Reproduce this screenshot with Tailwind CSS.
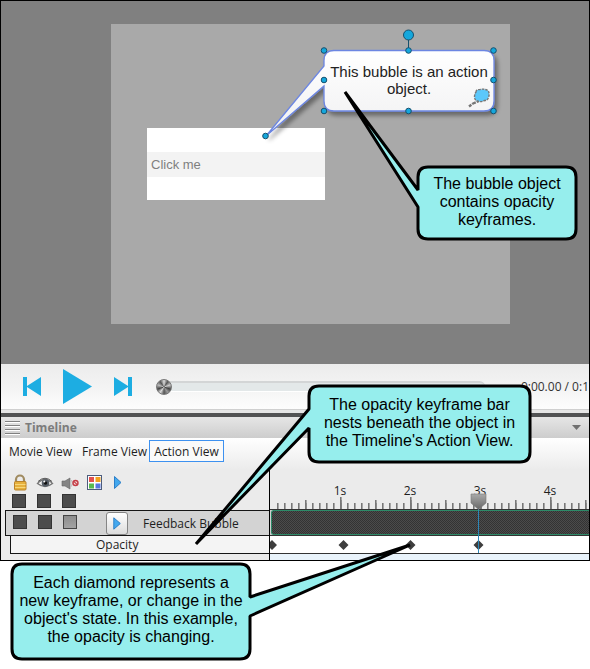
<!DOCTYPE html>
<html lang="en">
<head>
<meta charset="utf-8">
<title>Timeline action view</title>
<script src="https://cdn.jsdelivr.net/npm/@tailwindcss/browser@4"></script>
</head>
<body class="relative bg-white font-['Open_Sans',sans-serif] text-[12px] text-[#1e1e1e]">
<main class="flex flex-col overflow-hidden border border-black bg-[#ebebeb]">

  <!-- Stage -->
  <section class="flex h-[363px] bg-[#808080] pt-[23px] pr-[79px] pb-10 pl-[110px]" aria-label="Stage">
    <div class="relative flex-1 bg-[#a9a9a9]">
      <button class="absolute top-[104px] left-[36px] flex h-[72px] w-[178px] items-center bg-white">
        <span class="flex h-[25px] w-full items-center bg-[#f3f3f3] pt-px pl-1 font-['Liberation_Sans',sans-serif] text-[13px] text-[#7f7f7f]">Click me</span>
      </button>
      <svg class="absolute top-0 left-[139px] h-[124px] w-[260px]" viewBox="250 24 260 124" aria-hidden="true">
        <defs>
          <linearGradient id="bub" x1="0" y1="0" x2="0" y2="1"><stop offset="0" stop-color="#fff"/><stop offset="1" stop-color="#f0f0f1"/></linearGradient>
          <filter id="sh" x="-10%" y="-10%" width="125%" height="130%"><feDropShadow dx="3" dy="4" stdDeviation="2" flood-color="#000" flood-opacity=".38"/></filter>
        </defs>
        <path d="M334 50.500H484Q494 50.500 494 60.500V101Q494 111 484 111H334Q324 111 324 101V86L266 136L324 66V60.500Q324 50.500 334 50.500Z" fill="url(#bub)" stroke="#6c86e2" stroke-width="1.300" filter="url(#sh)"/>
        <path d="M469 106.500l4-3M473 103.500l6-2.500" stroke="#777" stroke-width="2.400" stroke-dasharray="3 1"/>
        <path d="M476 92q0-2.500 4-2.500q4-1 8 1q2 3 .5 7q-1 3-4 3q-4 2-7 .5q-3-1-3-4q0-3 1.500-5z" fill="#5bc8fb" stroke="#777" stroke-width="1.400" stroke-dasharray="2.500 1"/>
        <path d="M408.500 35V50" stroke="#16506b"/>
        <g fill="#14a7dc" stroke="#15506e">
          <circle cx="408.500" cy="35" r="5"/>
          <circle cx="324" cy="50.500" r="2.800"/><circle cx="408.500" cy="50.500" r="2.800"/><circle cx="493.500" cy="50.500" r="2.800"/>
          <circle cx="324" cy="80" r="2.800"/><circle cx="493.500" cy="80" r="2.800"/>
          <circle cx="324" cy="111" r="2.800"/><circle cx="408.500" cy="111" r="2.800"/><circle cx="493.500" cy="111" r="2.800"/>
          <circle cx="265.500" cy="136" r="2.800"/>
        </g>
      </svg>
      <p class="absolute top-[39px] left-[213px] w-[170px] text-center font-['Liberation_Sans',sans-serif] text-[15px] leading-[17px] text-[#222]">This bubble is an action object.</p>
    </div>
  </section>

  <!-- Player controls -->
  <section class="flex h-[45px] items-center overflow-hidden bg-linear-to-b from-[#ececec] via-[#f3f3f3] to-[#fdfdfd] pl-[22px]" aria-label="Player">
    <button aria-label="Previous"><svg class="h-[19px] w-[18px]" viewBox="0 0 18 19" fill="#1dade2"><path d="M0 0h4v9L18 0v19L4 10v9H0z"/></svg></button>
    <button class="ml-[22px]" aria-label="Play"><svg class="h-[35px] w-[29px]" viewBox="0 0 29 35" fill="#1dade2"><path d="M0 0L29 17.500L0 35z"/></svg></button>
    <button class="ml-[22px]" aria-label="Next"><svg class="h-[19px] w-[18px]" viewBox="0 0 18 19" fill="#1dade2"><path d="M0 0L14 9V0h4v19h-4v-9L0 19z"/></svg></button>
    <input type="range" min="0" max="100" value="0" aria-label="Position" class="ml-6 h-[11px] min-w-0 flex-1 appearance-none rounded-full border-t-2 border-b border-t-[#d3d5d6] border-b-white bg-[#e3e8e9] [&::-webkit-slider-thumb]:h-4 [&::-webkit-slider-thumb]:w-4 [&::-webkit-slider-thumb]:appearance-none [&::-webkit-slider-thumb]:rounded-full [&::-webkit-slider-thumb]:border [&::-webkit-slider-thumb]:border-[#777] [&::-webkit-slider-thumb]:bg-[conic-gradient(#ddd,#555,#ccc,#444,#999,#555,#ddd,#444,#bbb,#555,#ddd)]">
    <span class="ml-9 pt-px text-right whitespace-nowrap text-[#333]">0:00.00 / 0:1</span>
  </section>
  <div class="h-2 border-t border-b-4 border-t-[#d0d0d0] border-b-[#525354] bg-[#e6e6e6]"></div>

  <!-- Timeline header -->
  <header class="flex h-[21px] items-center bg-linear-to-b from-[#e6e6e6] to-[#cdcdcd] pr-2 pl-1">
    <svg class="h-[14px] w-[15px]" viewBox="0 0 15 14" aria-hidden="true"><path d="M0 1.500h15M0 5.500h15M0 9.500h15M0 13.500h15" stroke="#fff"/><path d="M0 .5h15M0 4.500h15M0 8.500h15M0 12.500h15" stroke="#808080"/></svg>
    <h2 class="ml-[5px] flex-1 pt-px font-bold text-[#7c7c7c]">Timeline</h2>
    <button aria-label="Timeline menu"><svg class="h-[5px] w-[9px]" viewBox="0 0 9 5"><path d="M0 0h9L4.500 5z" fill="#707070"/></svg></button>
  </header>

  <nav class="flex h-8 items-start bg-linear-to-b from-white to-[#ebebeb] pt-[2px] pl-2" aria-label="Views">
    <button class="h-[22px] w-[62px] pt-[2px] whitespace-nowrap">Movie View</button>
    <button class="ml-[11px] h-[22px] w-[62px] pt-[2px] whitespace-nowrap">Frame View</button>
    <button class="ml-[5px] h-[22px] w-[75px] border border-[#3d91f0] bg-[#fafafa] pt-[2px] whitespace-nowrap">Action View</button>
  </nav>

  <!-- Tracks -->
  <section class="flex h-[90px]" aria-label="Tracks">
    <div class="w-[269px] shrink-0 border-r border-black">
      <div class="flex h-[24px] items-center pt-[2px] pl-3">
        <svg class="h-4 w-[104px]" viewBox="13 475 104 16" overflow="visible" role="img" aria-label="Lock, visibility, audio, color and action columns">
          <path d="M16 483v-3.500a4 4 0 0 1 8 0V483" fill="none" stroke="#a08b60" stroke-width="2.200"/>
          <rect x="14.500" y="481.500" width="11.500" height="8.500" rx="1" fill="#e6b03c" stroke="#b9822a"/><path d="M15 484.500h10.500M15 487.500h10.500" stroke="#f6d67a"/>
          <path d="M37.500 483.500Q45 475.500 52.500 483.500Q45 489.500 37.500 483.500Z" fill="#f4f4f4" stroke="#777" stroke-width="1.400"/><path d="M38 481.500Q45 475 52 481.500" fill="none" stroke="#555"/>
          <circle cx="45.500" cy="483" r="3.800" fill="#555d66"/><circle cx="45.500" cy="483" r="1.800" fill="#111"/><circle cx="44.300" cy="481.600" r="1" fill="#fff"/>
          <path d="M62 481h3l5-3v11l-5-3h-3z" fill="#858585" stroke="#666" stroke-width=".6"/><path d="M71.500 480q1.500 3 0 6.500" stroke="#bbb" fill="none"/>
          <circle cx="75.500" cy="483" r="2.500" fill="#f3dcdc" stroke="#c43c45" stroke-width="1.400"/><path d="M73.800 481.300l3.400 3.400" stroke="#c43c45" stroke-width="1.200"/>
          <rect x="87.500" y="475.500" width="14" height="14" fill="#fff" stroke="#4c5c7c"/>
          <rect x="89" y="477" width="5" height="5" fill="#e3504e"/><rect x="95.500" y="477" width="5" height="5" fill="#f2a11e"/><rect x="89" y="483.500" width="5" height="5" fill="#58ba50"/><rect x="95.500" y="483.500" width="5" height="5" fill="#5877e0"/>
          <path d="M114.500 476.500L121 482.500L114.500 488.500Z" fill="#43a8ee" stroke="#2c7fc8"/>
        </svg>
      </div>
      <div class="flex h-[16px] items-start gap-[11px] pl-[11px]">
        <input type="checkbox" aria-label="Lock all" class="size-[14px] appearance-none border border-[#333] bg-[#4c4c4c]">
        <input type="checkbox" aria-label="Show all" class="size-[14px] appearance-none border border-[#333] bg-[#4c4c4c]">
        <input type="checkbox" aria-label="Mute all" class="size-[14px] appearance-none border border-[#333] bg-[#4c4c4c]">
      </div>
      <div class="ml-1 flex h-[26px] items-center gap-[11px] border-y border-l border-[#151515] bg-[#d3d3d3] pl-[7px]">
        <input type="checkbox" aria-label="Lock" class="mb-[2px] size-[14px] appearance-none border border-[#333] bg-[#4c4c4c]">
        <input type="checkbox" aria-label="Show" class="mb-[2px] size-[14px] appearance-none border border-[#333] bg-[#4c4c4c]">
        <input type="checkbox" aria-label="Mute" class="mb-[2px] size-[14px] appearance-none border border-[#444] bg-linear-to-b from-[#8c8c8c] to-[#a3a3a3]">
        <button aria-label="Play action" class="ml-[18px] flex h-[23px] w-[22px] items-center justify-center rounded-[3px] border border-[#858585] bg-linear-to-b from-white to-[#dcdcdc]"><svg class="h-[13px] w-2" viewBox="0 0 8 13"><path d="M.8 .8L7.300 6.500L.8 12.200Z" fill="#43a8ee" stroke="#2c7fc8"/></svg></button>
        <span class="ml-1 pt-[2px] whitespace-nowrap">Feedback Bubble</span>
      </div>
      <div class="ml-[9px] flex h-[18px] items-center border-b border-l border-[#151515] bg-[#f4f4f4] pl-[85px]">Opacity</div>
    </div>
    <div class="relative min-w-0 flex-1">
      <div class="relative h-[39px] overflow-hidden">
        <svg class="absolute bottom-0 left-0 h-3 w-full" aria-hidden="true">
          <defs>
            <pattern id="t1" x="0" width="7" height="12" patternUnits="userSpaceOnUse"><path d="M.8 6v6" stroke="#777" stroke-width="1.600"/></pattern>
            <pattern id="t5" x="0" width="35" height="12" patternUnits="userSpaceOnUse"><path d="M.8 3v9" stroke="#777" stroke-width="1.600"/></pattern>
            <pattern id="t10" x="0" width="70" height="12" patternUnits="userSpaceOnUse"><path d="M.8 0v12" stroke="#777" stroke-width="1.600"/></pattern>
          </defs>
          <rect x="3" width="100%" height="12" fill="url(#t1)"/><rect x="3" width="100%" height="12" fill="url(#t5)"/><rect x="3" width="100%" height="12" fill="url(#t10)"/>
        </svg>
        <div class="flex pt-[13px] pl-[35px] leading-4">
          <span class="w-[70px] shrink-0 text-center">1s</span><span class="w-[70px] shrink-0 text-center">2s</span><span class="w-[70px] shrink-0 text-center">3s</span><span class="w-[70px] shrink-0 text-center">4s</span>
        </div>
      </div>
      <div class="h-[27px] border-y border-[#333] bg-[#cfcfcf] pl-px">
        <div class="h-full rounded-l-[3px] border border-r-0 border-[#2d8a68] bg-[#3c3c3c] bg-[repeating-conic-gradient(#333_0_25%,#4b4b4b_0_50%)] bg-size-[2px_2px]"></div>
      </div>
      <div class="h-[18px] border-b border-[#333] bg-white">
        <svg class="h-[17px] w-full" role="img" aria-label="Opacity keyframes"><path d="M2 4l5 5-5 5-5-5zM73.500 4l5 5-5 5-5-5zM140.500 4l5 5-5 5-5-5zM208.500 4l5 5-5 5-5-5z" fill="#3e3e3e"/></svg>
      </div>
      <div class="h-[6px] bg-[#e9f3fb]"></div>
      <!-- Playhead -->
      <svg class="absolute top-[23px] left-[200px] h-[61px] w-[17px]" viewBox="0 0 17 61" aria-hidden="true">
        <defs><linearGradient id="ph" x1="0" y1="0" x2="0" y2="1"><stop offset="0" stop-color="#aaa"/><stop offset="1" stop-color="#666"/></linearGradient></defs>
        <path d="M8.500 16v44" stroke="#2d87b8"/>
        <path d="M1 1h15v9L8.500 16.500L1 10z" fill="url(#ph)" stroke="#777" stroke-width=".6"/>
      </svg>
    </div>
  </section>
</main>

<!-- Space for the callout that hangs below the window -->
<div class="h-[108px]"></div>

<!-- Callouts -->
<svg class="absolute top-0 left-0 h-[669px] w-[590px]" viewBox="0 0 590 669" fill="#96eeed" stroke="#000" stroke-width="3" stroke-linejoin="bevel" aria-hidden="true">
  <path d="M428 167H566Q576 167 576 177V229Q576 239 566 239H428Q418 239 418 229V207L345 92L418 190V177Q418 167 428 167Z"/>
  <path d="M319 386H520Q530 386 530 396V452Q530 462 520 462H319Q309 462 309 452V428L196 544L309 409V396Q309 386 319 386Z"/>
  <path d="M22 564H240Q250 564 250 574V597L410 545L250 616V649Q250 659 240 659H22Q12 659 12 649V574Q12 564 22 564Z"/>
</svg>
<p class="absolute top-[175px] left-[418px] w-[158px] px-2 text-center font-['Liberation_Sans',sans-serif] text-[16px] leading-[18px] text-black">The bubble object<br>contains opacity<br>keyframes.</p>
<p class="absolute top-[396px] left-[309px] w-[221px] text-center font-['Liberation_Sans',sans-serif] text-[16px] leading-[18px] text-black">The opacity keyframe bar<br>nests beneath the object in<br>the Timeline's Action View.</p>
<p class="absolute top-[574px] left-[12px] w-[238px] text-center font-['Liberation_Sans',sans-serif] text-[16px] leading-[18px] text-black">Each diamond represents a<br>new keyframe, or change in the<br>object's state. In this example,<br>the opacity is changing.</p>
</body>
</html>
